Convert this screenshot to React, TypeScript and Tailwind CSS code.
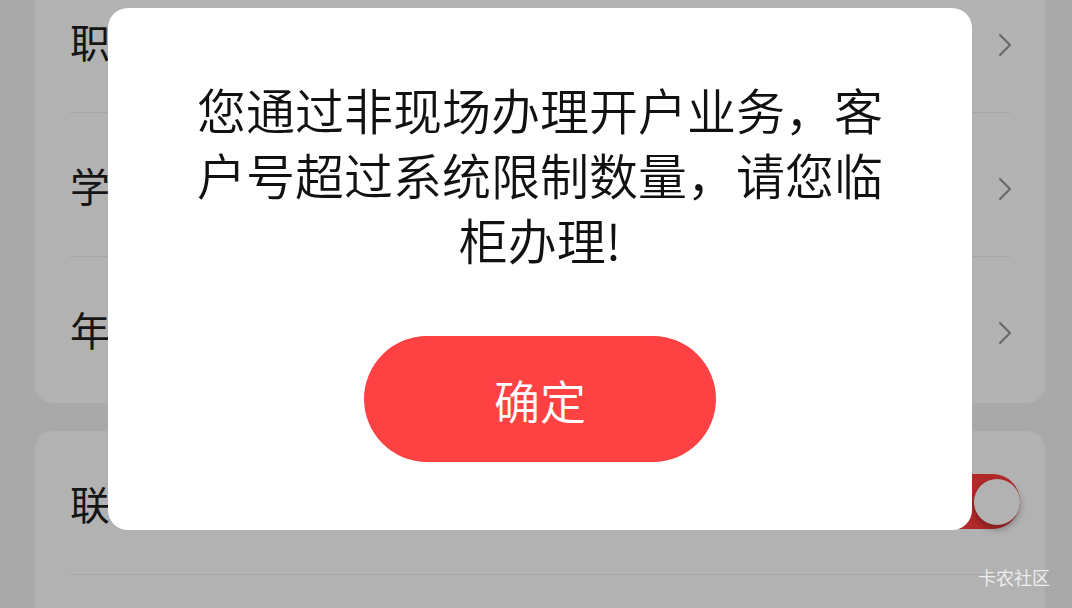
import { ChevronRight } from 'lucide-react';

const font = { fontFamily: '"Noto Sans CJK SC", "Noto Sans", sans-serif' };

function Row({ label, last, children }: { label: string; last?: boolean; children?: React.ReactNode }) {
  return (
    <div className="px-[35px]">
      <div className={`flex h-[144px] items-center justify-between ${last ? '' : 'border-b border-[#ececec]'}`}>
        <span className="text-[40px] text-[#1f1f1f]">{label}</span>
        {children ?? <ChevronRight className="mr-[-15px] mt-[8px] h-[40px] w-[40px] text-[#979797]" strokeWidth={1.3} />}
      </div>
    </div>
  );
}

export default function App() {
  return (
    <div className="relative h-[608px] w-[1072px] overflow-hidden bg-[#f3f3f3]" style={font}>
      {/* page underneath */}
      <div className="-mt-[175px] flex flex-col gap-[28px] pl-[35px] pr-[27px]">
        <div className="rounded-[18px] bg-white pb-[2px]">
          <Row label="姓名" />
          <Row label="职业" />
          <Row label="学历" />
          <Row label="年收入" last />
        </div>
        <div className="rounded-[18px] bg-white">
          <Row label="联系地址">
            <div className="relative mr-[-10px] mt-[-2px] h-[55px] w-[96px] rounded-full bg-[#ff3b3b]">
              <div className="absolute right-0 top-[4.5px] h-[46px] w-[46px] rounded-full bg-white shadow-[0_4px_7px_rgba(0,0,0,0.3)]" />
            </div>
          </Row>
          <Row label="邮箱" />
        </div>
      </div>

      {/* mask */}
      <div className="absolute inset-0 bg-black/30" />

      {/* dialog */}
      <div className="absolute left-[108px] top-[8px] flex h-[522px] w-[864px] flex-col items-center rounded-[20px] bg-white px-[82px] pt-[68px]">
        <p className="text-center text-[49px] font-[350] leading-[65px] text-[#111]">
          您通过非现场办理开户业务，客户号超过系统限制数量，请您临柜办理!
        </p>
        <button className="mt-[65px] flex h-[126px] w-[352px] items-center justify-center rounded-full bg-[#fe4244] text-[46px] font-[350] text-white">
          确定
        </button>
      </div>

      {/* watermark */}
      <div className="absolute right-[22px] top-[564px] text-[18px] text-[#ececec]">卡农社区</div>
    </div>
  );
}
